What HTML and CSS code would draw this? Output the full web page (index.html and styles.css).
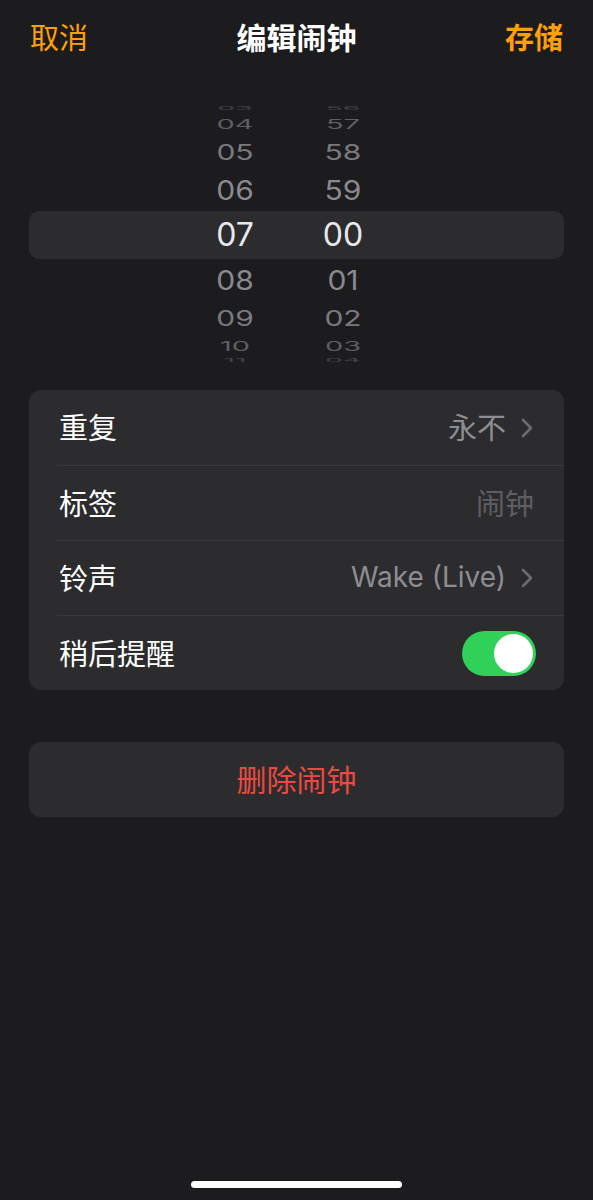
FILE: index.html
```html
<!DOCTYPE html>
<html>
<head>
  <title>编辑闹钟</title>
  <link rel="stylesheet" href="styles.css">
</head>
<body>

<div class="screen">
  <div class="nav">
    <span class="nav-btn">取消</span>
    <span class="nav-title">编辑闹钟</span>
    <span class="nav-btn save">存储</span>
  </div>

  <div class="picker">
    <div class="prow p4"><span>03</span><span>56</span></div>
    <div class="prow p3"><span>04</span><span>57</span></div>
    <div class="prow p2"><span>05</span><span>58</span></div>
    <div class="prow p1"><span>06</span><span>59</span></div>
    <div class="prow sel"><span>07</span><span>00</span></div>
    <div class="prow p1"><span>08</span><span>01</span></div>
    <div class="prow p2"><span>09</span><span>02</span></div>
    <div class="prow p3"><span>10</span><span>03</span></div>
    <div class="prow p4 last"><span>11</span><span>04</span></div>
  </div>

  <div class="card">
    <div class="row">
      <span class="label">重复</span>
      <span class="value">永不</span>
      <svg class="chev" width="12" height="20" viewBox="0 0 12 20"><path d="M2 2l8 8-8 8" fill="none" stroke="#6c6c70" stroke-width="2.6" stroke-linecap="round" stroke-linejoin="round"/></svg>
    </div>
    <div class="row">
      <span class="label">标签</span>
      <span class="value hint">闹钟</span>
    </div>
    <div class="row">
      <span class="label">铃声</span>
      <span class="value latin">Wake (Live)</span>
      <svg class="chev" width="12" height="20" viewBox="0 0 12 20"><path d="M2 2l8 8-8 8" fill="none" stroke="#6c6c70" stroke-width="2.6" stroke-linecap="round" stroke-linejoin="round"/></svg>
    </div>
    <div class="row">
      <span class="label">稍后提醒</span>
      <span class="toggle"><span class="knob"></span></span>
    </div>
  </div>

  <div class="card delete">删除闹钟</div>

  <div class="home-bar"></div>
</div>

</body>
</html>
```

FILE: styles.css
```css
body {
  margin: 0;
  background: #1c1c1e;
  font-family: "Noto Sans CJK SC", "Noto Sans", sans-serif;
  color: #fff;
}
.screen {
  height: 1200px;
  display: flex;
  flex-direction: column;
}
.nav {
  height: 76px;
  box-sizing: border-box;
  padding: 0 30px 4px;
  display: grid;
  grid-template-columns: 1fr auto 1fr;
  align-items: center;
}
.nav-btn {
  font-size: 29px;
  color: #ff9f0a;
}
.nav-btn.save {
  justify-self: end;
  font-weight: 700;
}
.nav-title {
  font-size: 30px;
  font-weight: 700;
}

/* time wheel */
.picker {
  margin: 27px 29px 0;
}
.prow {
  display: flex;
  gap: 28px;
  padding-left: 166px;
  align-items: center;
  font-family: Inter, "Liberation Sans", sans-serif;
  color: #8a8a8e;
}
.prow span {
  width: 80px;
  text-align: center;
  font-size: 30px;
  line-height: 1;
}
.prow.sel {
  height: 48px;
  background: #2c2c2f;
  border-radius: 10px;
  color: #e8e8ea;
}
.prow.sel span { font-size: 32px; }
.p1 { height: 42px; }
.p1 span { transform: scaleY(0.88); }
.p2 { height: 34px; color: #7a7a7e; }
.p2 span { transform: scaleY(0.7); }
.p3 { height: 22px; color: #5f5f63; }
.p3 span { transform: scaleY(0.45); font-size: 29px; }
.p4 { height: 10px; color: #434347; }
.p4 span { transform: scaleY(0.18); font-size: 28px; line-height: 10px; }
.p4.last { height: 6px; }
.p4.last span { line-height: 6px; }

/* settings list */
.card {
  margin: 27px 29px 0;
  background: #2c2c2e;
  border-radius: 12px;
}
.row {
  height: 75px;
  box-sizing: border-box;
  margin-left: 28px;
  padding: 0 28px 3px 2px;
  display: flex;
  align-items: center;
  font-size: 29px;
}
.row + .row {
  border-top: 1px solid #3a3a3c;
}
.label {
  flex: 1;
}
.value {
  color: #8d8d92;
}
.value.hint {
  color: #5f5f63;
  margin-right: 2px;
}
.value.latin {
  font-family: Inter, "Noto Sans", sans-serif;
  font-size: 28px;
}
.chev {
  margin-left: 15px;
  margin-right: 3px;
  margin-top: 3px;
}
.toggle {
  width: 74px;
  height: 45px;
  border-radius: 23px;
  background: #30d158;
  display: flex;
  justify-content: flex-end;
  align-items: center;
  padding: 0 3px;
  box-sizing: border-box;
  margin-top: 3px;
}
.knob {
  width: 39px;
  height: 39px;
  border-radius: 50%;
  background: #fff;
}

.delete {
  margin-top: 52px;
  height: 75px;
  box-sizing: border-box;
  padding-bottom: 3px;
  display: flex;
  justify-content: center;
  align-items: center;
  font-size: 30px;
  color: #eb4a40;
}

.home-bar {
  margin: auto auto 12px;
  width: 211px;
  height: 7px;
  border-radius: 4px;
  background: #fff;
}
```
